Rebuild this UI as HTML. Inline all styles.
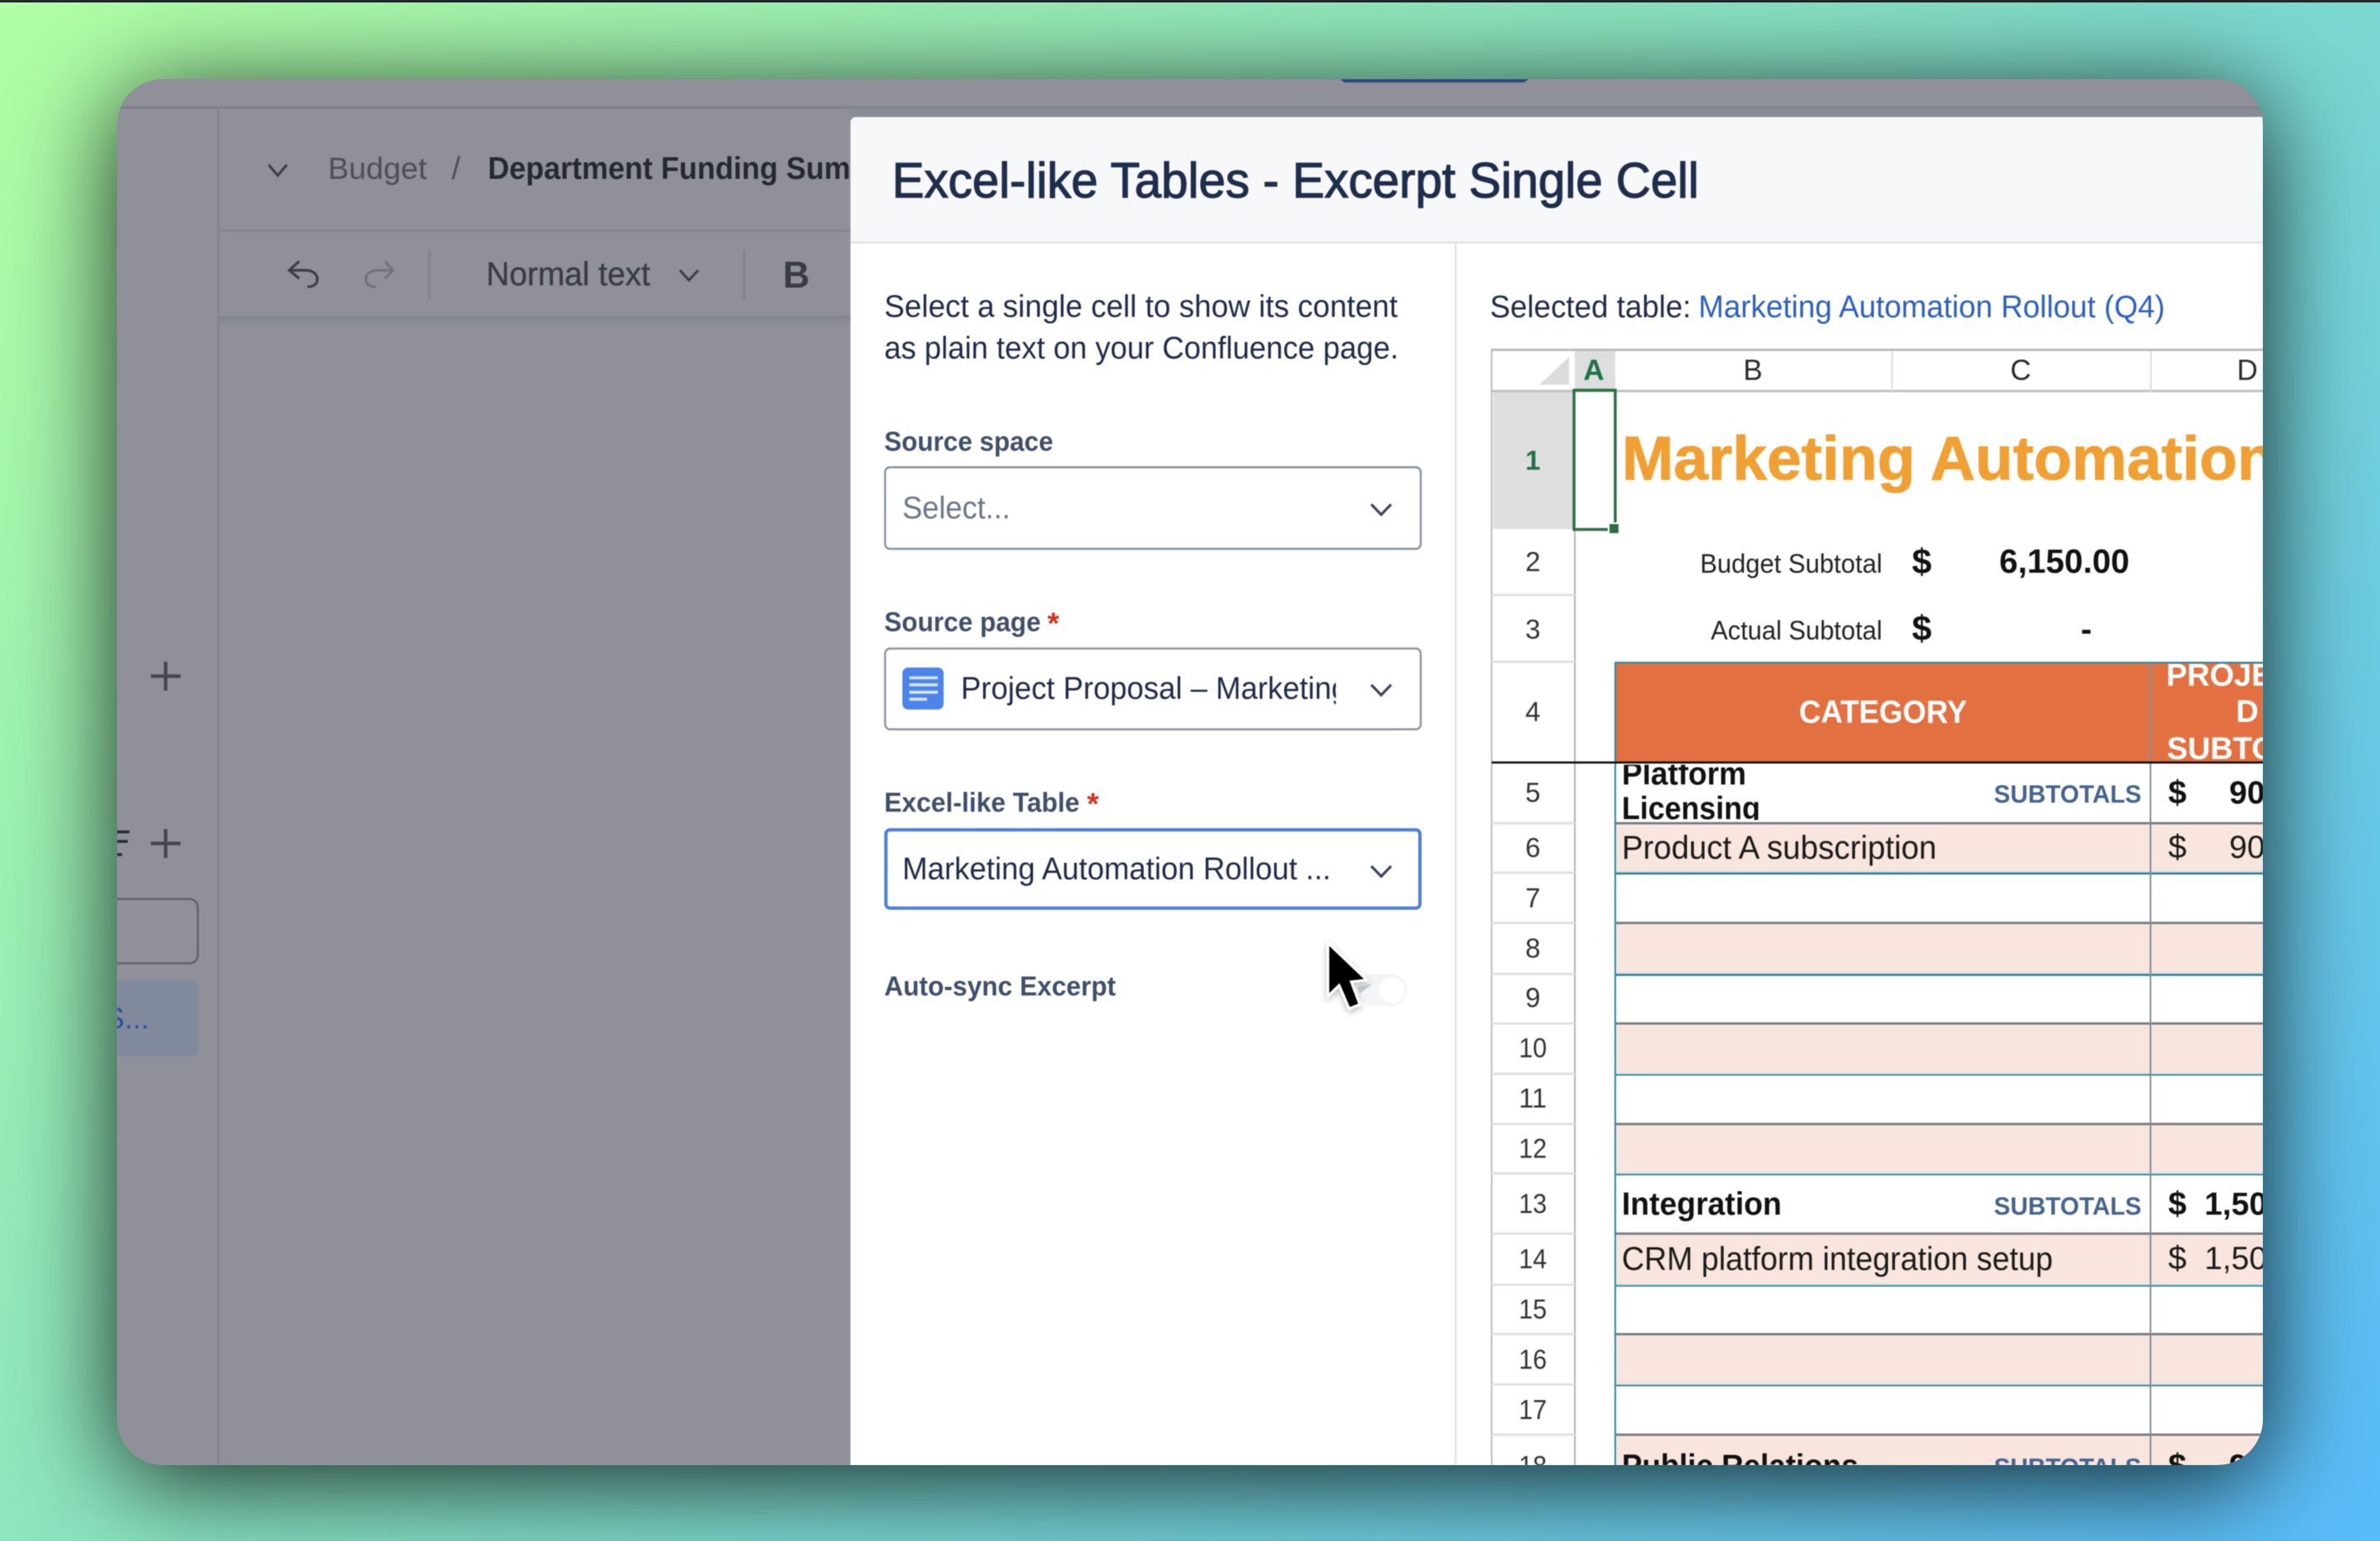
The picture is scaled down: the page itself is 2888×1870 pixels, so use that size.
<!DOCTYPE html>
<html lang="en">
<head>
<meta charset="utf-8">
<title>Excel-like Tables - Excerpt Single Cell</title>
<style>
html,body{margin:0;padding:0;width:2888px;height:1870px;overflow:hidden}
body{position:relative;background:linear-gradient(135deg,#b0ffa4 0%,#84dfc6 50%,#58bbfa 100%)}
#bar{position:absolute;left:0;top:0;width:2888px;height:3px;background:#1f2a2b}
#win{position:absolute;left:142px;top:96px;width:2604px;height:1682px;border-radius:56px;overflow:hidden;background:#8f9099;box-shadow:0 18px 125px rgba(0,0,0,.85)}
#win svg{position:absolute;left:-142px;top:-96px;display:block;filter:blur(.6px)}
text{font-family:"Liberation Sans",sans-serif}
.b{font-weight:700}
.rn{font-size:33px;fill:#333;text-anchor:middle}
.cell{font-size:40px;fill:#1a1a1a}
.cb{font-size:39px;font-weight:700;fill:#111}
.st{font-size:31px;font-weight:700;fill:#46638f}
.lb{font-size:33px;font-weight:700;fill:#3f4e69}
.val{font-size:38px;fill:#1e2a4a}
</style>
</head>
<body>
<div id="bar"></div>
<div id="win">
<svg width="2888" height="1870" viewBox="0 0 2888 1870" xmlns="http://www.w3.org/2000/svg">
<defs>
<clipPath id="modal"><path d="M1032 1778V149a7 7 0 0 1 7-7H2746V1778Z"/></clipPath>
<clipPath id="leftc"><rect x="142" y="96" width="890" height="1682"/></clipPath>
<clipPath id="pageclip"><rect x="1160" y="800" width="461" height="70"/></clipPath>
<clipPath id="r5"><rect x="1963" y="928" width="640" height="67"/></clipPath>
<clipPath id="hd"><rect x="2611" y="804" width="135" height="120"/></clipPath>
<linearGradient id="tbs" x1="0" y1="0" x2="0" y2="1"><stop offset="0" stop-color="#7d8088" stop-opacity=".65"/><stop offset="1" stop-color="#8f9099" stop-opacity="0"/></linearGradient>
<filter id="cs" x="-40%" y="-40%" width="180%" height="180%"><feDropShadow dx="0" dy="3" stdDeviation="4" flood-color="#000" flood-opacity=".28"/></filter>
</defs>

<!-- dimmed background app -->
<rect x="142" y="96" width="2604" height="1682" fill="#8f9099"/>
<rect x="1032" y="131" width="1714" height="11" fill="#888c94"/>
<path d="M1626 96H1855L1851 99Q1850 100 1847 100H1634Q1631 100 1630 99Z" fill="#2a4681"/>
<rect x="142" y="129" width="2604" height="3" fill="#80818a"/>
<rect x="264" y="131" width="2" height="1647" fill="#7f8089"/>
<rect x="265" y="279" width="767" height="2" fill="#80818a"/>
<rect x="265" y="383" width="767" height="2" fill="#85868f"/>
<rect x="265" y="385" width="767" height="18" fill="url(#tbs)"/>

<g clip-path="url(#leftc)">
<path d="M326 200L337 213L348 200" fill="none" stroke="#3a3c47" stroke-width="3"/>
<text x="398" y="217" font-size="37" fill="#4d4e58" textLength="120" lengthAdjust="spacingAndGlyphs">Budget</text>
<text x="548" y="217" font-size="38" fill="#4d4e58">/</text>
<text x="592" y="217" font-size="38" class="b" fill="#252833" textLength="440" lengthAdjust="spacingAndGlyphs">Department Funding Sum</text>

<path d="M363 317L351 328L363 338M351 328H371C380 328 385 333 385 339C385 345 380 348 373 348" fill="none" stroke="#3b3d48" stroke-width="3.2"/>
<path d="M467 317L477 328L467 338M477 328H458C449 328 444 333 444 339C444 345 449 348 456 348" fill="none" stroke="#70717b" stroke-width="3"/>
<rect x="520" y="303" width="2" height="60" fill="#7e7f88"/>
<text x="590" y="346" font-size="40" fill="#393b46" stroke="#393b46" stroke-width=".4" textLength="199" lengthAdjust="spacingAndGlyphs">Normal text</text>
<path d="M825 328L836 340L847 328" fill="none" stroke="#3b3d48" stroke-width="3"/>
<rect x="902" y="303" width="2" height="60" fill="#7e7f88"/>
<text x="950" y="349" font-size="45" class="b" fill="#393b46">B</text>

<path d="M183 820.5H219M201 803V838" stroke="#43454f" stroke-width="4.2" fill="none"/>
<path d="M183 1023.5H219M201 1006V1041" stroke="#43454f" stroke-width="4.2" fill="none"/>
<path d="M142 1009.5H157M142 1021H155M142 1037H148" stroke="#262834" stroke-width="3.4" fill="none"/>
<rect x="100" y="1091" width="140" height="78" rx="10" fill="none" stroke="#61626d" stroke-width="2.6"/>
<rect x="100" y="1190" width="141" height="92" rx="8" fill="#818a9c"/>
<text x="127" y="1248" font-size="36" fill="#2a4f9e">S...</text>
</g>

<!-- modal -->
<g clip-path="url(#modal)">
<rect x="1032" y="141" width="1714" height="1637" fill="#fff"/>
<rect x="1032" y="141" width="1714" height="153" fill="#f7f8fa"/>
<rect x="1032" y="293" width="1714" height="2.5" fill="#dfe1e6"/>
<rect x="1765" y="295" width="2.5" height="1483" fill="#e2e4e9"/>
<text x="1082.500" y="239.500" font-size="60" fill="#1f2d4d" stroke="#1f2d4d" stroke-width="1.3" textLength="979" lengthAdjust="spacingAndGlyphs">Excel-like Tables - Excerpt Single Cell</text>

<text x="1073" y="384.500" class="val" textLength="623" lengthAdjust="spacingAndGlyphs">Select a single cell to show its content</text>
<text x="1073" y="435" class="val" textLength="624" lengthAdjust="spacingAndGlyphs">as plain text on your Confluence page.</text>

<text x="1073" y="547" class="lb" textLength="205" lengthAdjust="spacingAndGlyphs">Source space</text>
<rect x="1074" y="567" width="650" height="99" rx="6" fill="#fff" stroke="#8490a6" stroke-width="2.4"/>
<text x="1095" y="629" font-size="38" fill="#69758a" textLength="131" lengthAdjust="spacingAndGlyphs">Select...</text>
<path d="M1664 612L1676 624.500L1688 612" fill="none" stroke="#3a4560" stroke-width="3.2"/>

<text x="1073" y="766" class="lb" textLength="190" lengthAdjust="spacingAndGlyphs">Source page</text>
<text x="1271" y="769" font-size="37" class="b" fill="#d5301a">*</text>
<rect x="1074" y="787" width="650" height="98" rx="6" fill="#fff" stroke="#8b93a5" stroke-width="2.4"/>
<rect x="1095" y="810" width="50" height="51" rx="7" fill="#4c84ec"/>
<path d="M1103.500 822.500H1138M1103.500 831H1138M1103.500 840H1138M1103.500 848.500H1125" stroke="#dce7fb" stroke-width="3.600" fill="none"/>
<g clip-path="url(#pageclip)"><text x="1166" y="848" class="val" textLength="470" lengthAdjust="spacingAndGlyphs">Project Proposal – Marketing</text></g>
<path d="M1664 831L1676 843.500L1688 831" fill="none" stroke="#3a4560" stroke-width="3.2"/>

<text x="1073" y="985" class="lb" textLength="237" lengthAdjust="spacingAndGlyphs">Excel-like Table</text>
<text x="1319" y="988" font-size="37" class="b" fill="#d5301a">*</text>
<rect x="1075" y="1007" width="648" height="95" rx="5" fill="#fff" stroke="#4f80d8" stroke-width="4"/>
<text x="1095" y="1067" class="val" textLength="520" lengthAdjust="spacingAndGlyphs">Marketing Automation Rollout ...</text>
<path d="M1664 1051L1676 1063.500L1688 1051" fill="none" stroke="#3a4560" stroke-width="3.2"/>

<text x="1073" y="1208" class="lb" textLength="281" lengthAdjust="spacingAndGlyphs">Auto-sync Excerpt</text>
<rect x="1647" y="1182" width="61" height="39" rx="19.5" fill="#f4f5f7"/>
<circle cx="1689" cy="1202" r="15.500" fill="#fff"/>
<path d="M1647 1198L1665 1194L1650 1206Z" fill="#c3c9d4"/>

<!-- selected table -->
<text x="1808" y="385" font-size="38" fill="#1f2a44" textLength="244" lengthAdjust="spacingAndGlyphs">Selected table:</text>
<text x="2061" y="385" font-size="38" fill="#2a5fc2" textLength="566" lengthAdjust="spacingAndGlyphs">Marketing Automation Rollout (Q4)</text>

<!-- spreadsheet -->
<rect x="1911" y="426" width="49" height="47" fill="#dedede"/>
<rect x="1812" y="476" width="97" height="166" fill="#dedede"/>
<path d="M1904 433V467H1868Z" fill="#dcdcdc"/>
<text x="1934" y="461" font-size="35" class="b" fill="#217346" text-anchor="middle">A</text>
<text x="2127" y="461" font-size="35" fill="#2a2a2a" text-anchor="middle">B</text>
<text x="2452" y="461" font-size="35" fill="#2a2a2a" text-anchor="middle">C</text>
<text x="2727" y="461" font-size="35" fill="#2a2a2a" text-anchor="middle">D</text>

<rect x="1809" y="423" width="937" height="3" fill="#bdbdbd"/>
<rect x="1810" y="473" width="936" height="3" fill="#c2c2c2"/>
<rect x="2295" y="426" width="2" height="49" fill="#dedede"/>
<rect x="2609" y="426" width="2" height="49" fill="#dedede"/>
<rect x="1809" y="423" width="2" height="1355" fill="#bcbcbc"/>
<rect x="1910" y="642" width="2" height="1136" fill="#b2b2b2"/>
<path d="M1810 722H1911M1810 803H1911M1810 999H1911M1810 1059H1911M1810 1120H1911M1810 1182H1911M1810 1242H1911M1810 1303H1911M1810 1364H1911M1810 1424H1911M1810 1497H1911M1810 1559H1911M1810 1619H1911M1810 1680H1911M1810 1741H1911" stroke="#e2e2e2" stroke-width="3" fill="none"/>

<!-- rows -->
<rect x="1960" y="804" width="786" height="121" fill="#e27040"/>
<rect x="1960" y="1000" width="786" height="59" fill="#f8e5de"/>
<rect x="1960" y="1121" width="786" height="61" fill="#f8e5de"/>
<rect x="1960" y="1243" width="786" height="60" fill="#f8e5de"/>
<rect x="1960" y="1365" width="786" height="59" fill="#f8e5de"/>
<rect x="1960" y="1498" width="786" height="61" fill="#f8e5de"/>
<rect x="1960" y="1620" width="786" height="60" fill="#f8e5de"/>
<rect x="1960" y="1742" width="786" height="36" fill="#f8e5de"/>

<path d="M1960 999H2746M1960 1120H2746M1960 1242H2746M1960 1364H2746M1960 1497H2746M1960 1619H2746M1960 1741H2746" stroke="#76777b" stroke-width="2.8" fill="none"/>
<path d="M1960 1060H2746M1960 1183H2746M1960 1304H2746M1960 1425H2746M1960 1560H2746M1960 1681H2746" stroke="#2f7a92" stroke-width="2.6" fill="none"/>
<path d="M1960 1057.500H2746M1960 1180.500H2746M1960 1302.500H2746M1960 1423.500H2746M1960 1558.500H2746M1960 1679.500H2746" stroke="#d3e6ea" stroke-width="2" fill="none"/>

<rect x="1959" y="803" width="2" height="975" fill="#2a8ca4"/>
<rect x="1960" y="803" width="786" height="2" fill="#2d8aa0"/>
<rect x="2608.500" y="805" width="2" height="973" fill="#7d909b"/>
<rect x="1810" y="924" width="936" height="2.600" fill="#111"/>

<!-- row numbers -->
<text x="1860" y="570" class="rn b" style="fill:#217346">1</text>
<text x="1860" y="693" class="rn">2</text>
<text x="1860" y="775" class="rn">3</text>
<text x="1860" y="875" class="rn">4</text>
<text x="1860" y="973" class="rn">5</text>
<text x="1860" y="1040" class="rn">6</text>
<text x="1860" y="1101" class="rn">7</text>
<text x="1860" y="1162" class="rn">8</text>
<text x="1860" y="1222" class="rn">9</text>
<text x="1860" y="1283" class="rn" textLength="34" lengthAdjust="spacingAndGlyphs">10</text>
<text x="1860" y="1344" class="rn" textLength="34" lengthAdjust="spacingAndGlyphs">11</text>
<text x="1860" y="1405" class="rn" textLength="34" lengthAdjust="spacingAndGlyphs">12</text>
<text x="1860" y="1472" class="rn" textLength="34" lengthAdjust="spacingAndGlyphs">13</text>
<text x="1860" y="1539" class="rn" textLength="34" lengthAdjust="spacingAndGlyphs">14</text>
<text x="1860" y="1600" class="rn" textLength="34" lengthAdjust="spacingAndGlyphs">15</text>
<text x="1860" y="1661" class="rn" textLength="34" lengthAdjust="spacingAndGlyphs">16</text>
<text x="1860" y="1722" class="rn" textLength="34" lengthAdjust="spacingAndGlyphs">17</text>
<text x="1860" y="1790" class="rn" textLength="34" lengthAdjust="spacingAndGlyphs">18</text>

<!-- selected cell -->
<rect x="1910" y="473.500" width="50" height="169" fill="none" stroke="#2d6e45" stroke-width="3.500"/>
<rect x="1951" y="634" width="15" height="15" fill="#fff"/>
<rect x="1953" y="636" width="11" height="11" fill="#2d6e45"/>

<!-- title & totals -->
<text x="1968" y="582" font-size="75" class="b" fill="#f0a033" stroke="#f0a033" stroke-width="1" textLength="793" lengthAdjust="spacingAndGlyphs">Marketing Automation</text>
<text x="2063" y="695" font-size="32" fill="#222" textLength="221" lengthAdjust="spacingAndGlyphs">Budget Subtotal</text>
<text x="2076" y="776" font-size="32" fill="#222" textLength="208" lengthAdjust="spacingAndGlyphs">Actual Subtotal</text>
<text x="2320" y="696" font-size="43" class="b" fill="#111">$</text>
<text x="2320" y="777" font-size="43" class="b" fill="#111">$</text>
<text x="2426" y="695" font-size="41" class="b" fill="#111" textLength="158" lengthAdjust="spacingAndGlyphs">6,150.00</text>
<text x="2525" y="777" font-size="40" class="b" fill="#111">-</text>

<text x="2183" y="877" font-size="39" class="b" fill="#fff" textLength="204" lengthAdjust="spacingAndGlyphs">CATEGORY</text>
<g clip-path="url(#hd)" fill="#fff" font-size="38" font-weight="700">
<text x="2731" y="832" text-anchor="middle">PROJECTE</text>
<text x="2727" y="876" text-anchor="middle">D</text>
<text x="2731" y="921" text-anchor="middle">SUBTOTAL</text>
</g>

<g clip-path="url(#r5)"><text x="1968" y="952" class="cb" textLength="151" lengthAdjust="spacingAndGlyphs">Platform</text><text x="1968" y="994" class="cb" textLength="168" lengthAdjust="spacingAndGlyphs">Licensing</text></g>
<text x="2419.500" y="974" class="st" textLength="179" lengthAdjust="spacingAndGlyphs">SUBTOTALS</text>
<text x="2631" y="975" font-size="40" class="b" fill="#111">$</text>
<text x="2705" y="975" font-size="39" class="b" fill="#111">90</text>

<text x="1968" y="1042" class="cell" textLength="382" lengthAdjust="spacingAndGlyphs">Product A subscription</text>
<text x="2631" y="1041" font-size="40" fill="#1a1a1a">$</text>
<text x="2705" y="1041" font-size="39" fill="#1a1a1a">90</text>

<text x="1968" y="1474" class="cb" textLength="194" lengthAdjust="spacingAndGlyphs">Integration</text>
<text x="2419.500" y="1474" class="st" textLength="179" lengthAdjust="spacingAndGlyphs">SUBTOTALS</text>
<text x="2631" y="1474" font-size="40" class="b" fill="#111">$</text>
<text x="2675" y="1474" font-size="39" class="b" fill="#111">1,50</text>

<text x="1968" y="1541" class="cell" textLength="523" lengthAdjust="spacingAndGlyphs">CRM platform integration setup</text>
<text x="2631" y="1540" font-size="40" fill="#1a1a1a">$</text>
<text x="2675" y="1540" font-size="39" fill="#1a1a1a">1,50</text>

<text x="1968" y="1792" class="cb" textLength="287" lengthAdjust="spacingAndGlyphs">Public Relations</text>
<text x="2419.500" y="1791" class="st" textLength="179" lengthAdjust="spacingAndGlyphs">SUBTOTALS</text>
<text x="2631" y="1792" font-size="40" class="b" fill="#111">$</text>
<text x="2705" y="1792" font-size="39" class="b" fill="#111">90</text>
</g>

<!-- cursor -->
<path d="M1613 1148V1205L1625.500 1193L1638 1222L1648 1218L1637.500 1190L1655 1188Z" fill="#000" stroke="#fff" stroke-width="6.500" stroke-linejoin="miter" paint-order="stroke" filter="url(#cs)"/>
</svg>
</div>
</body>
</html>
